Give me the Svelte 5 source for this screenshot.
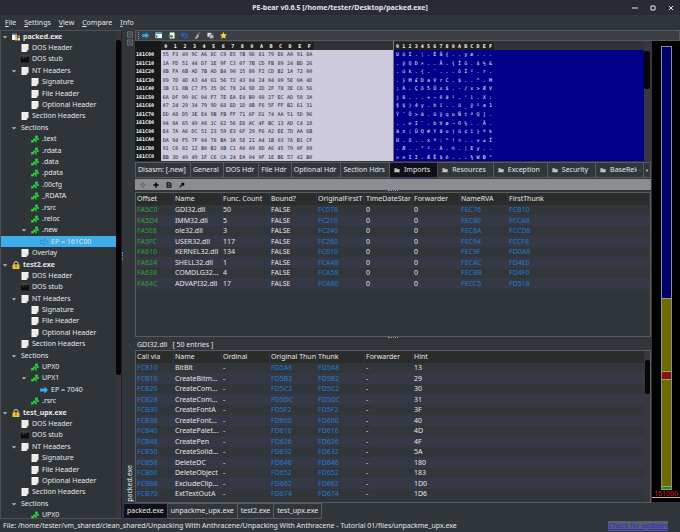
<script lang="ts">
	const menus = ['File', 'Settings', 'View', 'Compare', 'Info'];
	const hexDigits = '0123456789ABCDEF'.split('');

	type Node = { level: number; icon: string; label: string; open?: boolean; selected?: boolean };

	const headers: Node[] = [
		{ level: 1, icon: 'page', label: 'DOS Header' },
		{ level: 1, icon: 'stub', label: 'DOS stub' },
		{ level: 1, icon: 'page', label: 'NT Headers', open: true },
		{ level: 2, icon: 'page', label: 'Signature' },
		{ level: 2, icon: 'page', label: 'File Header' },
		{ level: 2, icon: 'page', label: 'Optional Header' },
		{ level: 1, icon: 'page', label: 'Section Headers' },
		{ level: 1, icon: '', label: 'Sections', open: true }
	];

	const section = (label: string, open = false): Node => ({ level: 2, icon: 'section', label, open });

	const tree: Node[] = [
		{ level: 0, icon: 'app', label: 'packed.exe', open: true },
		...headers,
		...['.text', '.rdata', '.data', '.pdata', '.00cfg', '_RDATA', '.rsrc', '.reloc'].map((s) => section(s)),
		section('.new', true),
		{ level: 3, icon: 'entry', label: 'EP = 161C00', selected: true },
		{ level: 1, icon: 'page', label: 'Overlay' },
		{ level: 0, icon: 'lock', label: 'test2.exe', open: true },
		...headers,
		section('UPX0'),
		section('UPX1', true),
		{ level: 3, icon: 'entry', label: 'EP = 7040' },
		section('.rsrc'),
		{ level: 0, icon: 'lock', label: 'test_upx.exe', open: true },
		...headers,
		section('UPX0')
	];

	const dump = [
		'55 F3 49 9C A6 8C C9 E5 7B 9D 81 79 E6 A0 91 8A',
		'1A FD 51 44 D7 1E 9F C3 07 7B CD FB 89 24 BD 26',
		'8B FA 6B AD 7B AD B4 90 15 80 F2 CD B2 1A 72 00',
		'89 7D 4D A3 44 61 56 72 43 84 24 04 09 5E 0A 4D',
		'3B C1 8B C7 F5 35 DC 78 24 9D 2D 2F 78 3E C6 56',
		'6A DF 99 0C 04 F7 7E EA E4 B9 08 27 EC AD 58 3A',
		'A7 24 29 34 79 9D 68 ED 1D 8B F6 5F FF B2 61 31',
		'DD A8 D5 3E E4 9B FB FF 71 6F D1 74 AA 51 5D 96',
		'04 8A 65 49 A8 1C 62 56 E6 AC 4F BC 13 AD C4 18',
		'E4 7A A6 DC 51 23 59 E3 6F 29 F6 A2 EE 7D AA 6B',
		'DA 94 F5 7F 04 78 BA 3A 5E 21 A4 1B 03 76 B1 CF',
		'91 C6 82 12 B0 B2 8B C1 A0 A9 8D A6 45 79 0F 80',
		'BB 3D 49 49 1F C6 CA 24 EA 04 9F 1E BE 57 42 B0'
	].map((row) => row.split(' '));

	function toChar(byte: string): string {
		const code = parseInt(byte, 16);
		if (code <= 32 || (code >= 127 && code <= 160) || code === 173) return '.';
		return String.fromCharCode(code);
	}

	function rowOffset(i: number): string {
		return (0x161c00 + i * 16).toString(16).toUpperCase();
	}

	const tabs = [
		{ label: 'Disasm: [.new]' },
		{ label: 'General' },
		{ label: 'DOS Hdr' },
		{ label: 'File Hdr' },
		{ label: 'Optional Hdr' },
		{ label: 'Section Hdrs' },
		{ label: 'Imports', folder: true },
		{ label: 'Resources', folder: true },
		{ label: 'Exception', folder: true },
		{ label: 'Security', folder: true },
		{ label: 'BaseReloc.', folder: true }
	];
	let activeTab = $state('Imports');

	const dllColumns = ['Offset', 'Name', 'Func. Count', 'Bound?', 'OriginalFirstT', 'TimeDateStar', 'Forwarder', 'NameRVA', 'FirstThunk'];
	const dlls = [
		['FA5C0', 'GDI32.dll', '50', 'FALSE', 'FC078', '0', '0', 'FEC76', 'FCB10'],
		['FA5D4', 'IMM32.dll', '5', 'FALSE', 'FC210', '0', '0', 'FEC80', 'FCCA8'],
		['FA5E8', 'ole32.dll', '3', 'FALSE', 'FC240', '0', '0', 'FEC8A', 'FCCD8'],
		['FA5FC', 'USER32.dll', '117', 'FALSE', 'FC260', '0', '0', 'FEC94', 'FCCF8'],
		['FA610', 'KERNEL32.dll', '134', 'FALSE', 'FC610', '0', '0', 'FEC9F', 'FD0A8'],
		['FA624', 'SHELL32.dll', '1', 'FALSE', 'FCA48', '0', '0', 'FECAC', 'FD4E0'],
		['FA638', 'COMDLG32...', '4', 'FALSE', 'FCA58', '0', '0', 'FECBB', 'FD4F0'],
		['FA64C', 'ADVAPI32.dll', '17', 'FALSE', 'FCA80', '0', '0', 'FECC5', 'FD518']
	];

	const funcColumns = ['Call via', 'Name', 'Ordinal', 'Original Thun', 'Thunk', 'Forwarder', 'Hint'];
	const funcs = [
		['FCB10', 'BitBlt', 'FD5A8', '13'],
		['FCB18', 'CreateBitm...', 'FD5B2', '29'],
		['FCB20', 'CreateCom...', 'FD5C2', '30'],
		['FCB28', 'CreateCom...', 'FD5DC', '31'],
		['FCB30', 'CreateFontA', 'FD5F2', '3F'],
		['FCB38', 'CreateFont...', 'FD600', '40'],
		['FCB40', 'CreatePalet...', 'FD616', '4D'],
		['FCB48', 'CreatePen', 'FD626', '4F'],
		['FCB50', 'CreateSolid...', 'FD632', '5A'],
		['FCB58', 'DeleteDC', 'FD646', '180'],
		['FCB60', 'DeleteObject', 'FD652', '183'],
		['FCB68', 'ExcludeClip...', 'FD662', '1D0'],
		['FCB70', 'ExtTextOutA', 'FD674', '1D6']
	].map(([via, name, thunk, hint]) => [via, name, '-', thunk, thunk, '-', hint]);

	const files = ['packed.exe', 'unpackme_upx.exe', 'test2.exe', 'test_upx.exe'];
	let activeFile = $state('packed.exe');
</script>

{#snippet icon(name: string)}
	<svg class="icon" viewBox="0 0 16 16" aria-hidden="true">
		{#if name === 'page'}
			<path d="M1 0h14v11l-4 5H1z" fill="#f1f1ee" />
			<path d="M15 11h-4v5z" fill="#a9aaa8" />
			<path d="M4 5h8M4 8h8M4 11h5" stroke="#dcdcd8" />
		{:else if name === 'stub'}
			<rect x="0" y="1" width="16" height="14" fill="#0c0c0c" />
			<path d="M0 2h16" stroke="#66686a" stroke-width="2" />
			<path d="M3 6h3M8 6h2" stroke="#b5b5b5" />
		{:else if name === 'section'}
			<path d="M8 1h6v5h2v4h-4v5H8v-3H6v3H0v-5h4V7h4z" fill="#1ea832" />
			<path d="M9 2h4v3H9zM5 8h4v3H5zM1 11h4v3H1zM12 7h3v2h-3z" fill="#32d94a" />
		{:else if name === 'entry'}
			<path d="M0 5h9V1l7 7-7 7v-4H0z" fill="#3daee9" stroke="#1f7fb5" />
		{:else if name === 'lock'}
			<path d="M4 8V5a4 4 0 0 1 8 0v3" fill="none" stroke="#d8d8d8" stroke-width="2" />
			<rect x="1" y="7" width="14" height="9" rx="1" fill="#fbc02d" />
			<path d="M8 9v4" stroke="#5d4300" stroke-width="2" />
		{:else if name === 'app'}
			<path d="M0 2h10v12H0z" fill="#f4f4f4" />
			<path d="M0 1h10v3H0z" fill="#2f8fdc" />
			<path d="M6 5h4v4H6zM11 5h5v4h-5z" fill="#f08a24" />
			<path d="M6 10h4v5H6z" fill="#f6c945" />
			<path d="M11 10h5v5h-5z" fill="#e8e8e8" />
		{:else if name === 'folder'}
			<path d="M1 3h6l2 2h6v9H1z" fill="#c3c5c7" />
			<path d="M3 7h12" stroke="#7d8084" />
		{:else if name === 'load'}
			<path d="M1 1h15v13H1z" fill="#f2f6f4" />
			<path d="M1 1h15v3H1z" fill="#2685b8" />
			<path d="M1 7l8 3-4 1-1 5z" fill="#1a9c5b" />
		{:else if name === 'reload'}
			<path d="M4 1h11v14H4z" fill="#f2f6f4" />
			<path d="M1 8h7V5l4 5-4 5v-3H1z" fill="#1b9a45" />
		{:else if name === 'undo'}
			<path d="M2 2v7h7M3 8c4-6 11-4 11 1 0 3-2 5-5 6" fill="none" stroke="#2463d8" stroke-width="3" />
		{:else if name === 'clean'}
			<path d="M13 1L7 8M8 6l3 3-5 6H3z" fill="#a6a9ac" stroke="#a6a9ac" stroke-width="2" />
		{:else if name === 'copy'}
			<path d="M1 2h9v9H1z" fill="#e8e8e8" />
			<path d="M6 6h9v9H6z" fill="#b7b9bb" stroke="#45494d" />
		{:else if name === 'star'}
			<path d="M8 0l2.4 5.3 5.6.6-4.2 3.8L13 15.500l-5-2.900-5 2.900 1.200-5.800L0 5.900l5.600-.6z" fill="#fdd835" />
		{:else if name === 'move'}
			<path d="M8 1v4M8 11v4M1 8h4M11 8h4M7 8h2" stroke="#303234" stroke-width="2" />
		{:else if name === 'plus'}
			<path d="M8 1v14M1 8h14" stroke="#050505" stroke-width="4" />
		{:else if name === 'save'}
			<path d="M3 2h7l3 3v9H3z" fill="none" stroke="#050505" stroke-width="3" />
			<path d="M8 6v5M5 9h6" stroke="#050505" stroke-width="2" />
		{:else if name === 'tool'}
			<path d="M2 14l7-7" stroke="#050505" stroke-width="3" />
			<path d="M7 2h7v7l-3 1-5-5z" fill="#050505" />
		{:else if name === 'close'}
			<path d="M1 1h14v14H1zM3 3l10 10M13 3L3 13" fill="none" stroke="#7c8186" stroke-width="2" />
		{/if}
	</svg>
{/snippet}

{#snippet table(columns: string[], rows: string[][], linked: number[], first: string)}
	<table>
		<colgroup>
			{#each columns as _, i}
				<col class={i === 0 ? 'col-first' : i === columns.length - 1 ? 'col-last' : i % 3 ? 'col-wide' : 'col'} />
			{/each}
		</colgroup>
		<thead>
			<tr>
				{#each columns as column}
					<th scope="col">{column}</th>
				{/each}
			</tr>
		</thead>
		<tbody>
			{#each rows as row}
				<tr>
					{#each row as cell, i}
						<td class={i === 0 ? first : linked.includes(i) ? 'blue' : ''}>{cell}</td>
					{/each}
				</tr>
			{/each}
		</tbody>
	</table>
{/snippet}

<div class="window">
	<header class="titlebar">
		<h1>PE-bear v0.6.5 [/home/tester/Desktop/packed.exe]</h1>
		<div class="window-buttons">
			<button aria-label="Minimize"><svg viewBox="0 0 8 8"><path d="M1 4h6" /></svg></button>
			<button aria-label="Maximize"><svg viewBox="0 0 8 8"><path d="M2 2h4v4H2z" /></svg></button>
			<button aria-label="Close"><svg viewBox="0 0 8 8"><path d="M2 2l4 4M6 2L2 6" /></svg></button>
		</div>
	</header>

	<nav class="menubar">
		{#each menus as menu}
			<button><u>{menu[0]}</u>{menu.slice(1)}</button>
		{/each}
	</nav>

	<div class="content">
		<aside class="tree-pane">
			<ul class="tree">
				{#each tree as node}
					<li class="node level-{node.level}" class:selected={node.selected}>
						<span class="arrow">{#if node.open}<svg viewBox="0 0 8 8"><path d="M1 3h6L4 6z" /></svg>{/if}</span>
						{#if node.icon}{@render icon(node.icon)}{/if}
						<span class="node-label">{node.label}</span>
					</li>
				{/each}
			</ul>
			<div class="scrollbar tree-scroll"><span class="thumb"></span></div>
		</aside>

		<div class="dock-edge">
			<button aria-label="Float">{@render icon('close')}</button>
			<button aria-label="Close dock">{@render icon('close')}</button>
			<span class="grip"></span>
			<span class="dock-title">packed.exe</span>
		</div>

		<div class="dock">
			<div class="toolbar">
				<span class="handle"></span>
				{#each ['entry', 'load', 'reload', 'undo', 'clean', 'copy', 'star'] as name}
					<button aria-label={name}>{@render icon(name)}</button>
				{/each}
			</div>

			<div class="dock-body">
				<main>
					<section class="hex-view">
						<div class="hex-part">
							<div class="hex-head">
								<span class="offset"></span>
								<span class="bytes">{#each hexDigits as d}<b>{d}</b>{/each}</span>
							</div>
							{#each dump as row, i}
								<div class="hex-row">
									<span class="offset">{rowOffset(i)}</span>
									<span class="bytes">{#each row as byte}<span>{byte}</span>{/each}</span>
								</div>
							{/each}
						</div>
						<div class="ascii-part">
							<div class="hex-head">
								<span class="chars">{#each hexDigits as d}<b>{d}</b>{/each}</span>
							</div>
							{#each dump as row}
								<div class="hex-row">
									<span class="chars">{#each row as byte}<span>{toChar(byte)}</span>{/each}</span>
								</div>
							{/each}
						</div>
						<div class="scrollbar hex-scroll"><span class="thumb"></span></div>
					</section>

					<div class="tabs">
						<div class="tab-list" role="tablist">
							{#each tabs as tab}
								<button
									role="tab"
									aria-selected={activeTab === tab.label}
									class:active={activeTab === tab.label}
									class:with-icon={tab.folder}
									onclick={() => (activeTab = tab.label)}
								>
									{#if tab.folder}{@render icon('folder')}{/if}
									{tab.label}
								</button>
							{/each}
						</div>
						<button class="tab-nav" aria-label="Scroll left"><svg viewBox="0 0 8 8"><path d="M5 1L2 4l3 3z" fill="#63686d" /></svg></button>
						<button class="tab-nav" aria-label="Scroll right"><svg viewBox="0 0 8 8"><path d="M3 1l3 3-3 3z" fill="#fcfcfc" /></svg></button>
					</div>

					<div class="tools">
						{#each ['move', 'plus', 'save', 'tool'] as name}
							<button aria-label={name}>{@render icon(name)}</button>
						{/each}
					</div>

					<div class="splitter"></div>

					<section class="grid-pane dll-pane">
						{@render table(dllColumns, dlls, [4, 7, 8], 'green')}
					</section>

					<div class="splitter"></div>

					<h2><span>GDI32.dll</span><span>[ 50 entries ]</span></h2>

					<section class="grid-pane func-pane">
						{@render table(funcColumns, funcs, [3, 4], 'blue')}
						<div class="scrollbar func-scroll"><span class="thumb"></span></div>
					</section>
				</main>

				<div class="map">
					<div class="map-bar">
						<span class="seg-blue"></span>
						<span class="seg-upper"></span>
						<span class="seg-red"></span>
						<span class="seg-lower"></span>
						<span class="seg-green"></span>
					</div>
					<span class="map-label">161000</span>
				</div>
			</div>

			<div class="file-tabs" role="tablist">
				{#each files as file}
					<button role="tab" aria-selected={activeFile === file} class:active={activeFile === file} onclick={() => (activeFile = file)}>{file}</button>
				{/each}
			</div>
		</div>
	</div>

	<footer>
		<span>File: /home/tester/vm_shared/clean_shared/Unpacking With Anthracene/Unpacking With Anthracene - Tutorial 01/files/unpackme_upx.exe</span>
		<a href="#updates">Check for updates</a>
	</footer>
</div>

<style>
	:global(body) {
		margin: 0;
		background: #31363b;
	}

	.window {
		display: flex;
		flex-direction: column;
		height: 100vh;
		overflow: hidden;
		background: #31363b;
		color: #e4e6e8;
		font-family: 'Noto Sans', sans-serif;
		font-size: 7px;
		line-height: 10px;
	}

	button {
		display: flex;
		align-items: center;
		margin: 0;
		padding: 0;
		border: 0;
		background: none;
		color: inherit;
		font: inherit;
		white-space: nowrap;
	}

	.icon {
		flex: none;
		width: 8px;
		height: 8px;
	}

	.titlebar {
		display: flex;
		flex: none;
		align-items: center;
		height: 15px;
		background: #2a2a37;
	}

	h1 {
		flex: 1;
		margin: 0;
		padding-left: 49px;
		font-size: 7px;
		font-weight: 700;
		text-align: center;
	}

	.window-buttons {
		display: flex;
		gap: 10px;
		padding-right: 5px;
	}

	.window-buttons svg {
		width: 8px;
		height: 8px;
		fill: none;
		stroke: #e4e6e8;
	}

	.menubar {
		display: flex;
		flex: none;
		gap: 8px;
		height: 15px;
		padding-left: 5px;
	}

	.content {
		display: flex;
		flex: 1;
		min-height: 0;
	}

	.tree-pane {
		display: flex;
		flex: none;
		width: 122px;
		box-sizing: border-box;
		border: 1px solid #4b5056;
		border-right-color: #222;
		background: #2f3439;
	}

	.tree {
		display: flex;
		flex: 1;
		flex-direction: column;
		min-width: 0;
		margin: 0 0 -3px;
		padding: 0;
		list-style: none;
	}

	.node {
		display: flex;
		flex: 1;
		align-items: center;
		min-height: 0;
		white-space: nowrap;
	}

	.node.level-0 {
		padding-left: 1px;
		font-weight: 700;
	}

	.node.level-1 {
		padding-left: 10px;
	}

	.node.level-2 {
		padding-left: 20px;
	}

	.node.level-3 {
		padding-left: 29px;
	}

	.node.selected {
		background: #3daee9;
	}

	.arrow {
		display: flex;
		width: 10px;
	}

	.arrow svg {
		width: 6px;
		height: 6px;
		fill: #b9bcbf;
	}

	.icon + .node-label {
		padding-left: 3px;
	}

	.scrollbar {
		display: flex;
		flex: none;
		flex-direction: column;
		width: 5px;
		background: #3b3541;
	}

	.thumb {
		border-radius: 2px;
		background: #070708;
	}

	.tree-scroll {
		padding-top: 9px;
	}

	.tree-scroll .thumb {
		flex: 0 0 70%;
	}

	.dock-edge {
		display: flex;
		flex: none;
		flex-direction: column;
		align-items: flex-end;
		width: 13px;
		box-sizing: border-box;
		padding-bottom: 17px;
	}

	.dock-edge .icon {
		width: 6px;
		height: 7px;
	}

	.dock-edge button {
		height: 8px;
		padding-right: 2px;
	}

	.grip {
		width: 1px;
		height: 8px;
		margin: auto 11px auto 0;
		border-left: 1px dotted #888;
	}

	.dock-title {
		writing-mode: vertical-rl;
		transform: rotate(180deg);
	}

	.dock {
		display: flex;
		flex: 1;
		flex-direction: column;
		min-width: 0;
	}

	.toolbar {
		display: flex;
		flex: none;
		align-items: center;
		gap: 5px;
		height: 11px;
		box-sizing: border-box;
		border: 1px solid #55595e;
		background: #3b3f45;
	}

	.toolbar .handle {
		width: 1px;
		height: 7px;
		margin-left: 2px;
		margin-right: -3px;
		border-left: 1px dotted #8a8e92;
	}

	.toolbar button {
		width: 8px;
	}

	.toolbar .icon {
		width: 7px;
		height: 7px;
	}

	.dock-body {
		display: flex;
		flex: 1;
		gap: 1px;
		min-height: 0;
	}

	main {
		display: flex;
		flex: 1;
		flex-direction: column;
		min-width: 0;
	}

	.hex-view {
		display: flex;
		flex: none;
		height: 120px;
		font-family: 'DejaVu Sans Mono', monospace;
		font-size: 5px;
		line-height: 8px;
	}

	.hex-part,
	.ascii-part {
		display: flex;
		flex-direction: column;
	}

	.hex-part {
		flex: 258;
		color: #24242c;
		background: #cdcadd;
	}

	.ascii-part {
		flex: 251;
		box-sizing: border-box;
		border-left: 1px solid #777;
		color: #f0f0ff;
		background: #00008b;
	}

	.hex-head {
		display: flex;
		flex: none;
		align-items: center;
		height: 9px;
		background: #2f3337;
		color: #f4f4f4;
	}

	.hex-head .bytes,
	.hex-head .chars {
		background: #202120;
	}

	.hex-row {
		display: flex;
		flex: 1;
		align-items: center;
		min-height: 0;
	}

	.offset {
		align-self: stretch;
		width: 25px;
		padding-left: 1px;
		background: #17181a;
		color: #f4f4f4;
		font-weight: 700;
	}

	.bytes,
	.chars {
		display: grid;
		grid-template-columns: repeat(16, 1fr);
		text-align: center;
	}

	.bytes {
		width: 153px;
	}

	.chars {
		width: 99px;
		padding-left: 1px;
	}

	.hex-scroll {
		width: 6px;
		padding: 10px 1px 0 0;
	}

	.hex-scroll .thumb {
		flex: 0 0 38px;
	}

	.tabs {
		display: flex;
		flex: none;
		height: 17px;
		padding-top: 1px;
		box-sizing: border-box;
	}

	.tab-list {
		display: flex;
		flex: 1;
		min-width: 0;
		overflow: hidden;
	}

	.tabs button {
		flex: none;
		padding: 0 4px 0 2px;
		border: 1px solid #575b60;
		border-left-width: 0;
		background: #31363b;
	}

	.tab-list button:first-child {
		border-left-width: 1px;
	}

	.tabs button.with-icon {
		gap: 4px;
		padding: 0 7px 0 4px;
	}

	.tabs .icon {
		width: 6px;
		height: 6px;
	}

	.tabs button.active,
	.file-tabs button.active {
		border-color: #4c4468;
		background: #0f0f18;
	}

	.tabs .tab-nav {
		width: 7px;
		padding: 0 1px;
	}

	.tab-nav svg {
		width: 5px;
		height: 5px;
	}

	.tools {
		display: flex;
		flex: none;
		gap: 6px;
		height: 11px;
		padding-left: 5px;
		margin-top: 1px;
		background: #8b8e91;
	}

	.tools button {
		width: 7px;
	}

	.tools .icon {
		width: 6px;
		height: 6px;
	}

	.splitter {
		flex: none;
		align-self: center;
		width: 10px;
		height: 2px;
		border-top: 1px dotted #96999c;
		box-sizing: border-box;
	}

	.grid-pane {
		display: flex;
		align-items: flex-start;
		min-height: 0;
		overflow: hidden;
		border: 1px solid #585c61;
		background: #31363a;
	}

	.dll-pane {
		flex: 143;
	}

	.func-pane {
		flex: 150;
	}

	table {
		flex: 1;
		width: 100%;
		min-width: 0;
		border-collapse: collapse;
		table-layout: fixed;
	}

	.col-first {
		width: 38px;
	}

	.col {
		width: 47px;
	}

	.col-wide {
		width: 48px;
	}

	.col-last {
		width: auto;
	}

	th,
	td {
		padding: 0 0 0 1px;
		overflow: hidden;
		font-weight: 400;
		text-align: left;
		white-space: nowrap;
	}

	th {
		height: 12px;
		background: #2a2b2b;
		box-shadow: inset -1px 0 #35383b;
	}

	tbody tr {
		height: 10px;
	}

	tbody tr:nth-child(even) {
		height: 11px;
		background: #363945;
	}

	.green {
		color: #2fa33a;
	}

	.blue {
		color: #1f7ad6;
	}

	h2 {
		display: flex;
		flex: none;
		gap: 5px;
		margin: 0;
		padding: 1px 0 0 2px;
		font-size: 7px;
		font-weight: 400;
	}

	.func-scroll {
		align-self: stretch;
		padding-top: 9px;
	}

	.func-scroll .thumb {
		flex: 0 0 34px;
	}

	.map {
		position: relative;
		display: flex;
		flex: none;
		justify-content: center;
		width: 28px;
		box-sizing: border-box;
		padding: 5px 0 12px;
		background: #000;
		border-bottom: 1px solid #31363b;
		overflow: hidden;
	}

	.map-bar {
		display: flex;
		flex-direction: column;
		width: 9px;
		border: 1px solid #8c8c9c;
		border-bottom: 0;
	}

	.map-bar span {
		border-bottom: 1px solid #a3a36a;
	}

	.seg-blue {
		flex: 252;
		background: #00006c;
	}

	.seg-upper,
	.seg-lower {
		background: #6c6c00;
	}

	.seg-upper {
		flex: 72;
	}

	.seg-red {
		flex: 7;
		background: #8b1010;
	}

	.seg-lower {
		flex: 106;
	}

	.seg-green {
		flex: 2;
		background: #109010;
	}

	.map-label {
		position: absolute;
		right: 0;
		bottom: 4px;
		left: 0;
		padding-left: 2px;
		border-bottom: 1px solid #e0a0a0;
		color: #e01010;
		line-height: 7px;
	}

	.file-tabs {
		display: flex;
		flex: none;
		height: 16px;
		margin-left: -11px;
	}

	.file-tabs button {
		padding: 0 3px;
		border: 1px solid #575b60;
		border-left-width: 0;
	}

	footer {
		display: flex;
		flex: none;
		align-items: center;
		justify-content: space-between;
		height: 14px;
		margin-top: -1px;
		padding: 1px 12px 0 3px;
		box-sizing: border-box;
		white-space: nowrap;
	}

	footer a {
		background: #5b5f66;
		color: #2a2ae0;
	}
</style>
